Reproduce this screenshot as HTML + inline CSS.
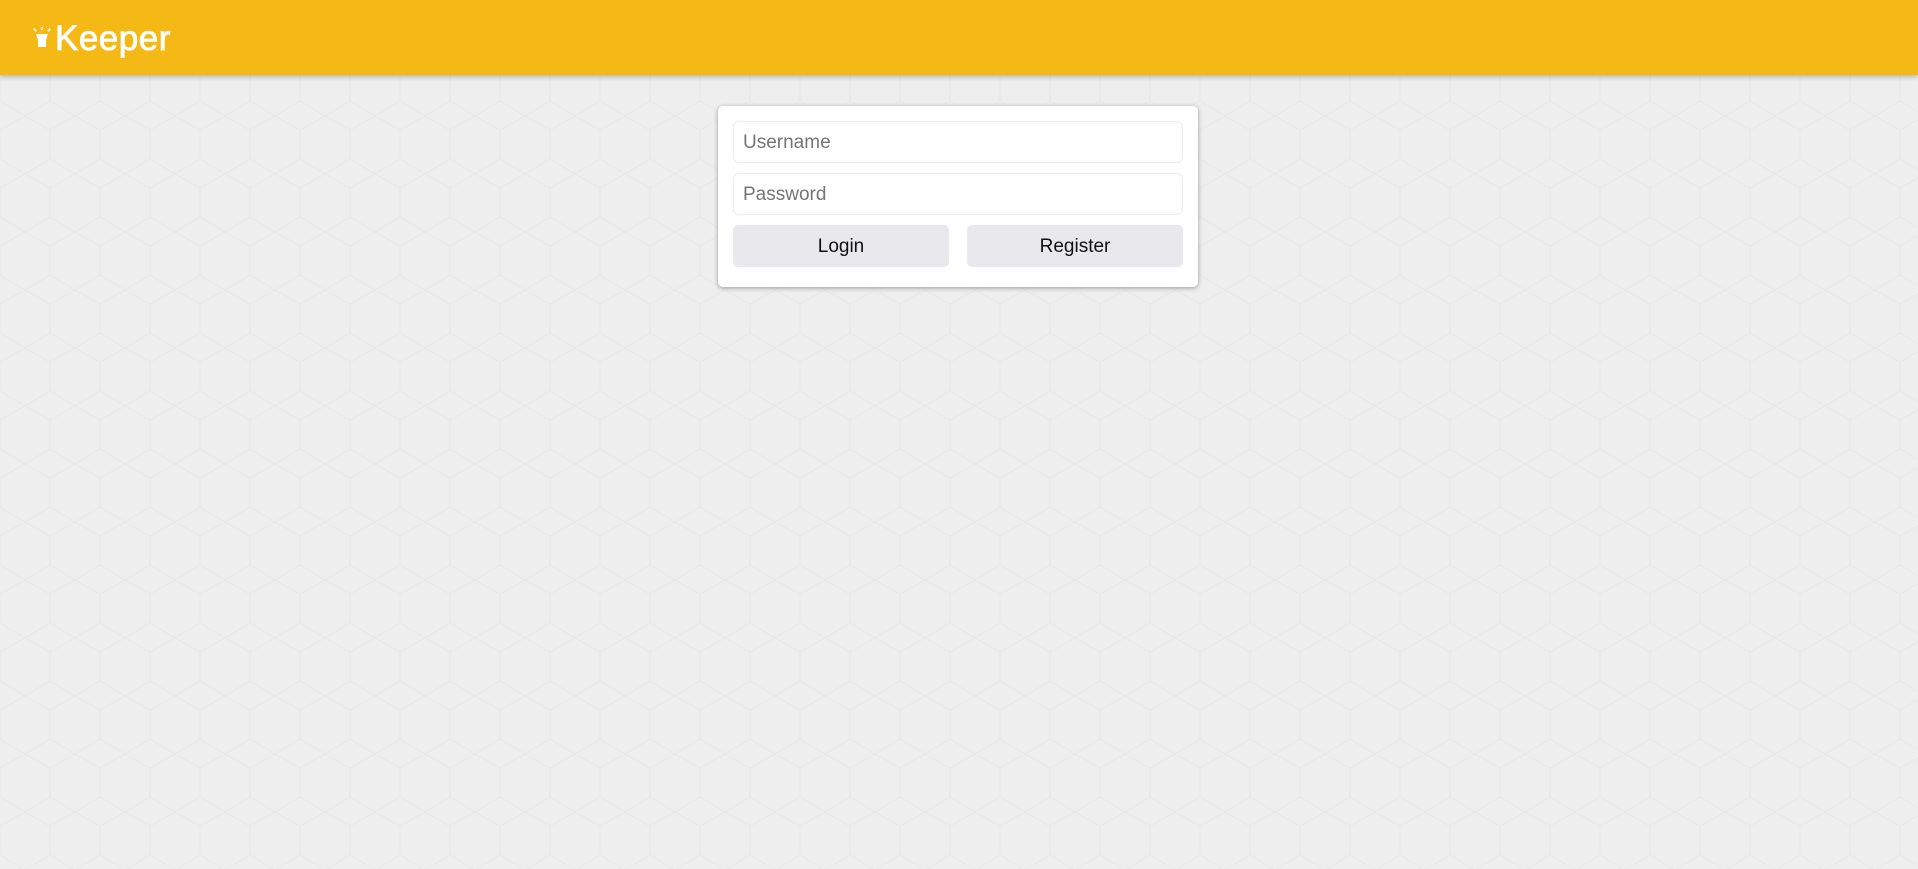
<!DOCTYPE html>
<html><head><style>
html,body{margin:0;padding:0;width:1918px;height:869px;overflow:hidden;background:#eeeeee;font-family:"Liberation Sans",sans-serif;}
.hdr{position:absolute;left:0;top:0;width:1918px;height:75px;background:#f5b916;box-shadow:0 2px 5px rgba(0,0,0,.25);}
.logo{position:absolute;left:55px;top:19px;color:#fff;font-size:35px;letter-spacing:0.5px;-webkit-text-stroke:0.8px #fff;}
.card{position:absolute;left:718px;top:106px;width:480px;height:181px;background:#fff;border-radius:5px;box-shadow:0 1px 5px rgba(0,0,0,.35);}
.inp{position:absolute;left:15px;border:1px solid #ececec;border-radius:6px;color:#757575;font-size:19px;line-height:42px;padding-left:9px;box-sizing:border-box;width:450px;height:42px;}
.btn{position:absolute;top:119px;width:216px;height:42px;background:#e9e9ed;border-radius:5px;font-size:19px;line-height:44px;text-align:center;color:#111;}
</style></head><body>
<svg width="1918" height="869" style="position:absolute;left:0;top:0">
<defs><pattern id="p" width="100" height="58" patternUnits="userSpaceOnUse"><path d="M0 14 L25 0 L50 14 L75 0 L100 14 M0 14 V43 L25 58 M50 14 V43 L25 58 M50 43 L75 58 L100 43 M100 14 V43" fill="none" stroke="#e7e7e7" stroke-width="1"/></pattern></defs>
<rect width="1918" height="869" fill="url(#p)"/>
</svg>
<div class="hdr">
<svg style="position:absolute;left:32px;top:26px" width="20" height="26" viewBox="0 0 20 26"><path d="M4 8 H16 L14 14 V21 H6 V14 Z" fill="#fff"/><path d="M2 3 L4 5 M10 1 V4 M18 3 L16 5" stroke="#fff" stroke-width="2"/></svg>
<div class="logo">Keeper</div>
</div>
<div class="card">
<div class="inp" style="top:15px">Username</div>
<div class="inp" style="top:67px">Password</div>
<div class="btn" style="left:15px">Login</div>
<div class="btn" style="left:249px">Register</div>
</div>
</body></html>
